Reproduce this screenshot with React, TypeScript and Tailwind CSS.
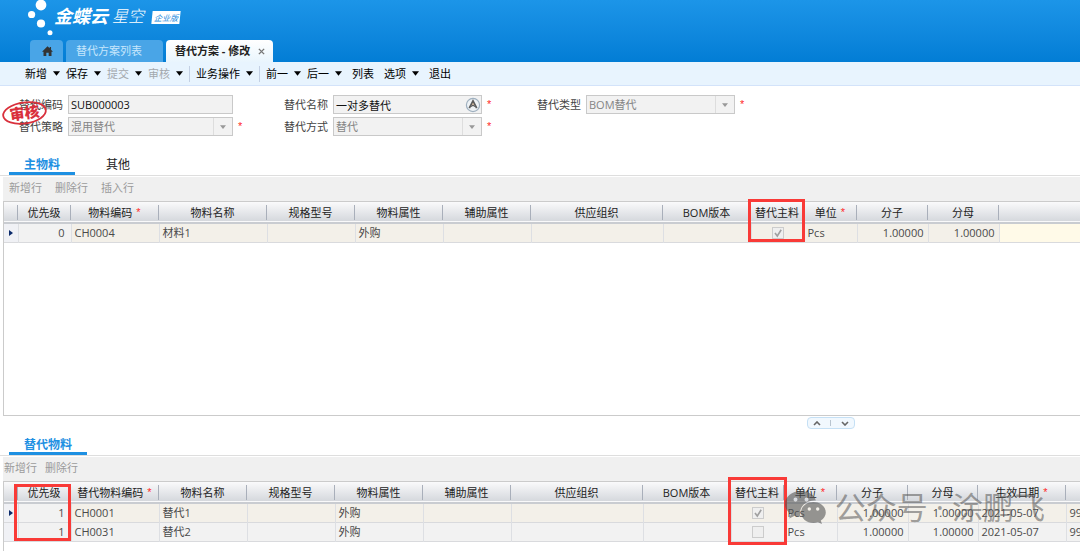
import { ReactNode, useState } from 'react';
import clsx from 'clsx';

interface Column {
  title: string;
  width?: string;
  required?: boolean;
  align?: 'right' | 'center';
}

interface ToolbarItem {
  label: string;
  menu?: boolean;
  disabled?: boolean;
  divider?: boolean;
  spaced?: boolean;
}

type Cell = string | boolean;

const toolbarItems: ToolbarItem[] = [
  { label: '新增', menu: true },
  { label: '保存', menu: true },
  { label: '提交', menu: true, disabled: true },
  { label: '审核', menu: true, disabled: true, divider: true },
  { label: '业务操作', menu: true, divider: true },
  { label: '前一', menu: true },
  { label: '后一', menu: true },
  { label: '列表', spaced: true },
  { label: '选项', menu: true, spaced: true },
  { label: '退出', spaced: true },
];

const mainColumns: Column[] = [
  { title: '优先级', width: 'w-[53px]', align: 'right' },
  { title: '物料编码', width: 'w-[88px]', required: true },
  { title: '物料名称', width: 'w-[108px]' },
  { title: '规格型号', width: 'w-[88px]' },
  { title: '物料属性', width: 'w-[88px]' },
  { title: '辅助属性', width: 'w-[88px]' },
  { title: '供应组织', width: 'w-[132px]' },
  { title: 'BOM版本', width: 'w-[88px]' },
  { title: '替代主料', width: 'w-[53px]', align: 'center' },
  { title: '单位', width: 'w-[53px]', required: true },
  { title: '分子', width: 'w-[71px]', align: 'right' },
  { title: '分母', width: 'w-[71px]', align: 'right' },
  { title: '' },
];

const mainRows: Cell[][] = [
  ['0', 'CH0004', '材料1', '', '外购', '', '', '', true, 'Pcs', '1.00000', '1.00000', ''],
];

const subColumns: Column[] = [
  { title: '优先级', width: 'w-[53px]', align: 'right' },
  { title: '替代物料编码', width: 'w-[88px]', required: true },
  { title: '物料名称', width: 'w-[88px]' },
  { title: '规格型号', width: 'w-[88px]' },
  { title: '物料属性', width: 'w-[88px]' },
  { title: '辅助属性', width: 'w-[88px]' },
  { title: '供应组织', width: 'w-[132px]' },
  { title: 'BOM版本', width: 'w-[88px]' },
  { title: '替代主料', width: 'w-[53px]', align: 'center' },
  { title: '单位', width: 'w-[53px]', required: true },
  { title: '分子', width: 'w-[71px]', align: 'right' },
  { title: '分母', width: 'w-[70px]', align: 'right' },
  { title: '生效日期', width: 'w-[88px]', required: true },
  { title: '' },
];

const subRows: Cell[][] = [
  ['1', 'CH0001', '替代1', '', '外购', '', '', '', true, 'Pcs', '1.00000', '1.00000', '2021-05-07', '9999-12-31'],
  ['1', 'CH0031', '替代2', '', '外购', '', '', '', false, 'Pcs', '1.00000', '1.00000', '2021-05-07', '9999-12-31'],
];

function Caret({ className }: { className?: string }) {
  return (
    <svg viewBox="0 0 8 5" className={clsx('shrink-0', className)} fill="currentColor" aria-hidden="true">
      <path d="M0 0h8L4 5z" />
    </svg>
  );
}

function Asterisk() {
  return <span className="font-['Liberation_Sans',sans-serif] text-[#ff2a2a]">*</span>;
}

function Logo() {
  return (
    <div className="flex h-10 items-start pl-7 text-white">
      <svg viewBox="0 0 26 36" className="h-9 w-[26px]" fill="currentColor" aria-hidden="true">
        <circle cx="13" cy="5" r="5.4" />
        <circle cx="3.6" cy="14.5" r="3.6" />
        <circle cx="13" cy="23.5" r="4.1" />
        <circle cx="22" cy="32.7" r="2.5" />
      </svg>
      <div className="flex items-center gap-1 pt-1">
        <span className="text-[18px] leading-6 font-bold italic">金蝶云</span>
        <span className="text-[16px] leading-6 font-light italic">星空</span>
        <span className="mt-[2px] ml-1 -skew-x-6 bg-white px-[2px] text-[8px] leading-[13px] text-[#1788dc] italic">
          企业版
        </span>
      </div>
    </div>
  );
}

function PageTabs() {
  return (
    <nav className="flex items-end gap-[3px] pl-[30px] text-[11px] leading-[22px]">
      <button type="button" aria-label="首页" className="flex h-[22px] w-[33px] items-center justify-center rounded-t bg-[#49a5e7] pl-[2px]">
        <svg viewBox="0 0 12 11" className="h-[10px] w-[11px]" fill="#333" aria-hidden="true">
          <path d="M6 0.3 8.4 2.6V1.2h1.5v2.9L12 6.2h-1.6V11H7.3V7.4H4.7V11H1.6V6.2H0z" />
        </svg>
      </button>
      <button type="button" className="h-[22px] w-[97px] rounded-t bg-[#49a5e7] pl-[10px] text-left text-[#c6e6fc]">
        替代方案列表
      </button>
      <div className="flex h-[22px] items-center gap-2 rounded-t bg-linear-to-b from-white to-[#e9f5fd] pr-2 pl-[9px] font-bold text-[#222]">
        <span>替代方案 - 修改</span>
        <button type="button" aria-label="关闭" className="text-[#777]">
          <svg viewBox="0 0 8 8" className="size-[7px]" stroke="currentColor" strokeWidth="1.6" aria-hidden="true">
            <path d="M1 1l6 6M7 1L1 7" />
          </svg>
        </button>
      </div>
    </nav>
  );
}

function Toolbar() {
  return (
    <div className="flex h-6 items-center border-b border-[#d3e3fa] bg-[#e8f4fe] pl-[25px]">
      {toolbarItems.map((item) => (
        <div key={item.label} className={clsx('flex items-center', item.spaced && 'ml-1')}>
          <button type="button" className="flex items-center gap-[6px] text-black">
            <span className={clsx(item.disabled && 'text-[#a3a8ad]')}>{item.label}</span>
            {item.menu && <Caret className="h-[5px] w-[7px]" />}
          </button>
          <span className={clsx('h-4', item.divider ? 'mx-[6px] w-px bg-[#c3d0e4]' : 'w-[6px]')} />
        </div>
      ))}
    </div>
  );
}

interface FieldProps {
  id: string;
  label: string;
  value: string;
  width: string;
  select?: boolean;
  required?: boolean;
  icon?: ReactNode;
}

function Field({ id, label, value, width, select, required, icon }: FieldProps) {
  return (
    <div className="flex h-[19px] items-center gap-[5px]">
      <label htmlFor={id} className="w-[63px] shrink-0 text-right text-[#444]">
        {label}
      </label>
      <div className={clsx('flex h-[19px] items-center border border-[#c9c9c9] bg-[#f2f2f2]', width)}>
        {select ? (
          <>
            <select id={id} disabled className="h-full min-w-0 flex-1 appearance-none pl-[2px] leading-[17px] text-[#858585]">
              <option>{value}</option>
            </select>
            <span className="flex h-full w-[19px] items-center justify-center border-l border-[#ddd] text-[#999]">
              <Caret className="h-1 w-[6px]" />
            </span>
          </>
        ) : (
          <>
            <input id={id} defaultValue={value} readOnly className="h-full min-w-0 flex-1 pl-[2px] text-[#111] outline-none" />
            {icon}
          </>
        )}
      </div>
      {required && <Asterisk />}
    </div>
  );
}

function LanguageIcon() {
  return (
    <svg viewBox="0 0 16 16" className="size-4" fill="none" aria-hidden="true">
      <circle cx="8" cy="8" r="6.6" fill="#eef2f5" stroke="#9fb0bf" strokeWidth="1.2" />
      <path d="M4.300 11.200 8 4l3.700 7.200" stroke="#5c5c5c" strokeWidth="1.800" />
      <path d="M6.200 9.600 8 8l1.800 1.600" stroke="#5c5c5c" strokeWidth="1.200" />
      <path d="M8 6.400v1.600" stroke="#e0b080" strokeWidth="1" />
    </svg>
  );
}

function AuditStamp() {
  return (
    <svg viewBox="0 0 48 28" className="pointer-events-none absolute top-[13px] left-0 h-7 w-12" aria-label="审核">
      <g transform="rotate(-8 24 14)">
        <ellipse cx="24.5" cy="14" rx="21.5" ry="10.5" fill="none" stroke="#d9303c" strokeWidth="1.8" />
        <text x="24.5" y="19.5" textAnchor="middle" fontSize="15" fontWeight="900" fill="#d9303c">
          审核
        </text>
      </g>
    </svg>
  );
}

function BillForm() {
  return (
    <form className="relative grid grid-cols-[265px_253px_1fr] gap-y-[3px] pt-[9px]">
      <Field id="code" label="替代编码" value="SUB000003" width="w-[165px]" />
      <Field id="name" label="替代名称" value="一对多替代" width="w-[149px]" required icon={<LanguageIcon />} />
      <Field id="type" label="替代类型" value="BOM替代" width="w-[149px]" select required />
      <Field id="policy" label="替代策略" value="混用替代" width="w-[165px]" select required />
      <Field id="mode" label="替代方式" value="替代" width="w-[149px]" select required />
      <AuditStamp />
    </form>
  );
}

interface SectionTabsProps {
  tabs: string[];
  active: string;
  onChange?: (tab: string) => void;
}

function SectionTabs({ tabs, active, onChange }: SectionTabsProps) {
  return (
    <div className="flex gap-4 border-b border-[#dedede] pl-[9px] text-[12px] leading-[15px]">
      {tabs.map((tab) => (
        <button
          key={tab}
          type="button"
          onClick={() => onChange?.(tab)}
          className={clsx(
            'border-b-[3px] px-[15px]',
            tab === active ? 'border-[#1e90e2] font-bold text-[#1e90e2]' : 'border-transparent text-[#222]'
          )}
        >
          {tab}
        </button>
      ))}
    </div>
  );
}

function RowCheckbox({ checked }: { checked: boolean }) {
  return (
    <label className="mx-auto grid size-3 place-items-center">
      <input
        type="checkbox"
        aria-label="替代主料"
        checked={checked}
        disabled
        className="col-start-1 row-start-1 size-3 appearance-none border border-[#ccc] bg-[#efefef]"
      />
      {checked && (
        <svg viewBox="0 0 10 10" className="col-start-1 row-start-1 size-[10px]" fill="none" stroke="#a0a0a0" strokeWidth="1.6" aria-hidden="true">
          <path d="M2 5l2.3 3L8.2 1.8" />
        </svg>
      )}
    </label>
  );
}

function Grid({ columns, rows }: { columns: Column[]; rows: Cell[][] }) {
  return (
    <table className="w-full table-fixed border-collapse">
      <colgroup>
        <col className="w-[14px]" />
        {columns.map((col, i) => (
          <col key={i} className={col.width} />
        ))}
      </colgroup>
      <thead>
        <tr className="h-[21px] border-b-2 border-[#c9ccd1] bg-linear-to-b from-[#fafafb] to-[#d5d8dd]">
          <th className="p-0">
            <div className="h-[15px] border-r border-[#a9afba]" />
          </th>
          {columns.map((col, i) => (
            <th key={i} className="p-0 font-normal text-[#222]">
              <div
                className={clsx(
                  'flex h-[15px] items-center justify-center gap-1 whitespace-nowrap',
                  i < columns.length - 1 && 'border-r border-[#a9afba]'
                )}
              >
                {col.title}
                {col.required && <Asterisk />}
              </div>
            </th>
          ))}
        </tr>
      </thead>
      <tbody>
        {rows.map((row, r) => (
          <tr key={r} className={clsx('h-[19px] border-b border-[#d9dadd] text-[#4a4a4a]', r === 0 ? 'bg-[#f3f0e9]' : 'bg-[#f2f2f2]')}>
            <td className="border-r border-[#dddfe3] bg-[#f0f1f5] p-0">
              {r === 0 && (
                <svg viewBox="0 0 4 6" className="ml-[5px] h-[6px] w-1" fill="#0b2a6b" aria-hidden="true">
                  <path d="M0 0l4 3-4 3z" />
                </svg>
              )}
            </td>
            {row.map((cell, i) => (
              <td
                key={i}
                className={clsx(
                  'overflow-hidden border-[#dddfe3] p-0 whitespace-nowrap',
                  i < row.length - 1 && 'border-r',
                  i === 0 && 'bg-[#f2f2f2]',
                  cell === '' && i === row.length - 1 && 'bg-[#fffae8]',
                  columns[i].align === 'right' ? (i === 0 ? 'pr-[6px] text-right' : 'pr-1 text-right') : 'pl-[3px]',
                  columns[i].align === 'center' && 'pr-[3px]'
                )}
              >
                {typeof cell === 'boolean' ? <RowCheckbox checked={cell} /> : cell}
              </td>
            ))}
          </tr>
        ))}
      </tbody>
    </table>
  );
}

function GridActions({ actions, className }: { actions: string[]; className: string }) {
  return (
    <div className={clsx('mt-[1px] ml-[3px] flex h-6 items-center bg-[#f0f0f0] pb-[3px] text-[#9b9b9b]', className)}>
      {actions.map((action) => (
        <button key={action} type="button">
          {action}
        </button>
      ))}
    </div>
  );
}

function Splitter() {
  return (
    <div className="mt-[1px] mr-[225px] flex h-3 w-12 items-center justify-around self-end rounded border border-[#c5e0f5] bg-[#f1f8fe] text-[#666]">
      <button type="button" aria-label="收起">
        <svg viewBox="0 0 8 5" className="h-[5px] w-2" fill="none" stroke="currentColor" strokeWidth="1.6" aria-hidden="true">
          <path d="M1 4l3-3 3 3" />
        </svg>
      </button>
      <span className="h-[6px] w-px bg-[#b8c4cf]" />
      <button type="button" aria-label="展开">
        <svg viewBox="0 0 8 5" className="h-[5px] w-2" fill="none" stroke="currentColor" strokeWidth="1.6" aria-hidden="true">
          <path d="M1 1l3 3 3-3" />
        </svg>
      </button>
    </div>
  );
}

function Watermark() {
  return (
    <div className="pointer-events-none absolute top-[7px] right-[35px] flex items-center gap-[9px] text-[#555]/55">
      <svg viewBox="0 0 42 34" className="h-[34px] w-[42px]" aria-hidden="true">
        <path
          fill="#555"
          fillOpacity="0.6"
          fillRule="evenodd"
          d="M17 1C8 1 1 6.8 1 14c0 4.200 2.300 7.600 5.800 10L5.300 28.500l5.300-2.700c2 .5 4 .8 6 .7A11.500 11.500 0 0 1 16 23c0-7 6.500-12.500 14.500-12.500h1.300C30.500 5 24.300 1 17 1zM11.500 7.500a2 2 0 1 1 0 4 2 2 0 0 1 0-4zm11 0a2 2 0 1 1 0 4 2 2 0 0 1 0-4z"
        />
        <path
          fill="#555"
          fillOpacity="0.6"
          fillRule="evenodd"
          d="M29.500 12C22.500 12 17 16.700 17 22.500S22.500 33 29.500 33c1.500 0 3-.3 4.400-.7L38 34l-1.200-3.400c3-2 5-4.800 5-8.100C41.800 16.700 36.300 12 29.500 12zM25.300 17.300a1.700 1.700 0 1 1 0 3.400 1.700 1.700 0 0 1 0-3.400zm8.400 0a1.700 1.700 0 1 1 0 3.400 1.700 1.700 0 0 1 0-3.400z"
        />
      </svg>
      <span className="text-[31px] leading-9 whitespace-nowrap">公众号 · 涂鹏飞</span>
    </div>
  );
}

function Highlight({ className }: { className: string }) {
  return <div className={clsx('pointer-events-none absolute border-[3px] border-[#f93a37]', className)} />;
}

export default function App() {
  const [tab, setTab] = useState('主物料');

  return (
    <div className="flex min-h-screen flex-col overflow-hidden bg-white font-['Open_Sans','Noto_Sans_CJK_SC',sans-serif] text-[11px] leading-[15px]">
      <header className="bg-linear-to-b from-[#1c95e8] to-[#027dd5]">
        <Logo />
        <PageTabs />
      </header>
      <Toolbar />
      <BillForm />

      {/* 主物料 */}
      <section className="flex flex-col pt-[21px]">
        <SectionTabs tabs={['主物料', '其他']} active={tab} onChange={setTab} />
        <GridActions actions={['新增行', '删除行', '插入行']} className="gap-[13px] pl-[6px]" />
        <div className="relative ml-[3px] min-h-[215px] border-t border-b border-l border-[#cbcbcb]">
          <Grid columns={mainColumns} rows={mainRows} />
          <Highlight className="-top-[3px] left-[744px] h-[43px] w-[57px]" />
        </div>
        <Splitter />
      </section>

      {/* 替代物料 */}
      <section className="flex flex-1 flex-col pt-2">
        <SectionTabs tabs={['替代物料']} active="替代物料" />
        <GridActions actions={['新增行', '删除行']} className="gap-2 pl-[1px]" />
        <div className="relative ml-[3px] flex-1 border-t border-l border-[#cbcbcb]">
          <Grid columns={subColumns} rows={subRows} />
          <Highlight className="top-[2px] left-[10px] h-[57px] w-[57px]" />
          <Highlight className="-top-[5px] left-[724px] h-[68px] w-[59px]" />
          <Watermark />
        </div>
      </section>
    </div>
  );
}
